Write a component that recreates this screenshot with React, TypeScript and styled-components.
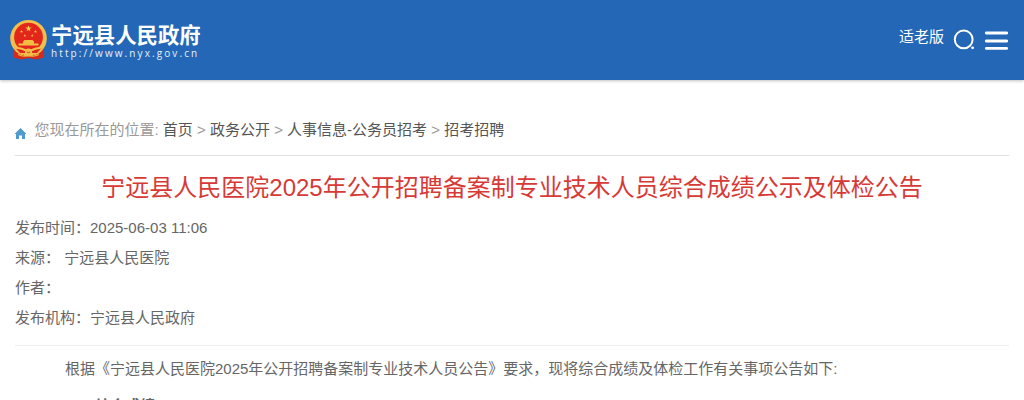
import React from "react";
import styled, { createGlobalStyle } from "styled-components";

const GlobalStyle = createGlobalStyle`
  * { box-sizing: border-box; }
  html, body { margin: 0; padding: 0; }
  body {
    height: 400px;
    overflow: hidden;
    background: #fff;
    color: #666;
    font: 15px/30px "Liberation Sans", "Noto Sans CJK SC", sans-serif;
  }
`;

const Page = styled.div`
  height: 400px;
  overflow: hidden;
`;

const Header = styled.header`
  display: flex;
  justify-content: space-between;
  height: 80px;
  padding: 0 16px 0 10px;
  background: #2367b6;
  box-shadow: 0 1px 3px rgba(0, 0, 0, 0.25);
  color: #fff;
`;

const Brand = styled.div`
  display: flex;
  padding-top: 19px;
`;

const BrandText = styled.div`
  padding: 1px 0 0 3px;
`;

const BrandName = styled.div`
  font: bold 21.4px/27px "Noto Sans CJK SC", sans-serif;
  white-space: nowrap;
`;

const BrandUrl = styled.div`
  margin-top: 1px;
  font: 10px/11px "Open Sans", sans-serif;
  letter-spacing: 2.1px;
  color: #e6f1fc;
`;

const Tools = styled.div`
  display: flex;
  align-items: flex-start;
`;

const SeniorLink = styled.a`
  padding-top: 22px;
  margin-right: 9px;
`;

const SearchIcon = styled.svg`
  margin: 28px 10px 0 0;
`;

const MenuIcon = styled.svg`
  margin-top: 30px;
`;

const Content = styled.main`
  padding: 35px 15px 0;
`;

const Breadcrumb = styled.nav`
  display: flex;
  align-items: flex-start;
  height: 41px;
  border-bottom: 1px solid #e1e1e1;
  color: #999;
`;

const HomeIcon = styled.svg`
  margin: 13px 8.5px 0 0;
`;

const Crumb = styled.a`
  color: #555;
`;

const Title = styled.h1`
  margin: 12px 0 0;
  font-size: 24px;
  line-height: 40px;
  font-weight: normal;
  text-align: center;
  color: #d73a36;
`;

const Meta = styled.div`
  height: 138px;
  padding-top: 5px;
  margin-bottom: 8px;
  border-bottom: 1px solid #eee;
`;

const MetaRow = styled.div`
  height: 30px;
`;

const Paragraph = styled.p<{ $bold?: boolean }>`
  margin: 0 0 7px;
  padding-left: 50px;
  font-weight: ${(p) => (p.$bold ? "bold" : "normal")};
`;

const Star = ({ x, y, r }: { x: number; y: number; r: number }) => (
  <path
    transform={`translate(${x} ${y}) scale(${r})`}
    d="M0-1 .24-.31 .95-.31 .38.12 .59.81 0 .4-.59.81-.38.12-.95-.31-.24-.31Z"
    fill="#f8cf4c"
  />
);

const Emblem = () => (
  <svg width="38" height="41" viewBox="0 0 38 41">
    <path d="M4 27 4 38.5 11 40.5 18.5 39 26 40.5 33 38.5 33 27Z" fill="#d62a1f" />
    <circle cx="18.5" cy="19.2" r="18.3" fill="#f0bf4e" />
    <circle cx="18.5" cy="18.2" r="14.4" fill="#e3261c" />
    <Star x={18.5} y={9.6} r={3.3} />
    <Star x={11.5} y={12.5} r={1.6} />
    <Star x={25.5} y={12.5} r={1.6} />
    <Star x={14.8} y={16.6} r={1.5} />
    <Star x={22.2} y={16.6} r={1.5} />
    <path d="M13 22.5 14.5 21H22.5L24 22.5V24.5H28.5V26.5H8.5V24.5H13Z" fill="#f3bd42" />
    <path d="M5.5 29H31.5L27 34H10Z" fill="#e3261c" />
    <path d="M5 28.5Q12 29 18.5 32.5Q25 29 32 28.5" fill="none" stroke="#f3c04a" strokeWidth="2" />
    <circle cx="18.5" cy="33" r="3.6" fill="#f3c04a" />
    <path d="M16.8 33Q18.5 34.4 20.2 33" fill="none" stroke="#d23b1f" />
    <path d="M4 33.5Q9 37.5 14 35.5L13 40 4 38.5ZM33 33.5Q28 37.5 23 35.5L24 40 33 38.5Z" fill="#d62a1f" />
    <path d="M8 35.5Q13 38 18.5 36.5Q24 38 29 35.5" fill="none" stroke="#efb541" strokeWidth="1.2" />
  </svg>
);

const crumbs = ["首页", "政务公开", "人事信息-公务员招考", "招考招聘"];
const meta = ["发布时间：2025-06-03 11:06", "来源： 宁远县人民医院", "作者：", "发布机构：宁远县人民政府"];

export default function App() {
  return (
    <Page>
      <GlobalStyle />
      <Header>
        <Brand>
          <Emblem />
          <BrandText>
            <BrandName>宁远县人民政府</BrandName>
            <BrandUrl>http://www.nyx.gov.cn</BrandUrl>
          </BrandText>
        </Brand>
        <Tools>
          <SeniorLink>适老版</SeniorLink>
          <SearchIcon width="22" height="22" viewBox="0 0 22 22">
            <circle cx="10.7" cy="11.4" r="8.9" fill="none" stroke="#fff" strokeWidth="2" />
            <circle cx="19.6" cy="19.8" r="1.4" fill="#fff" />
          </SearchIcon>
          <MenuIcon width="23" height="20" viewBox="0 0 23 20">
            <path d="M1.3 3H21.7M1.3 11H21.7M1.3 18.3H21.7" stroke="#fff" strokeWidth="2.8" strokeLinecap="round" />
          </MenuIcon>
        </Tools>
      </Header>
      <Content>
        <Breadcrumb>
          <HomeIcon width="11" height="11" viewBox="0 0 11 11">
            <path d="M5.5 0 11 5.5V6H10V11H7V7.5H4V11H1V6H0V5.5Z" fill="#4f9bcd" />
          </HomeIcon>
          <span>
            您现在所在的位置:{" "}
            {crumbs.map((c, i) => (
              <React.Fragment key={c}>
                {i > 0 && " > "}
                <Crumb>{c}</Crumb>
              </React.Fragment>
            ))}
          </span>
        </Breadcrumb>
        <Title>宁远县人民医院2025年公开招聘备案制专业技术人员综合成绩公示及体检公告</Title>
        <Meta>
          {meta.map((m) => (
            <MetaRow key={m}>{m}</MetaRow>
          ))}
        </Meta>
        <Paragraph>根据《宁远县人民医院2025年公开招聘备案制专业技术人员公告》要求，现将综合成绩及体检工作有关事项公告如下:</Paragraph>
        <Paragraph $bold>一、综合成绩</Paragraph>
      </Content>
    </Page>
  );
}
